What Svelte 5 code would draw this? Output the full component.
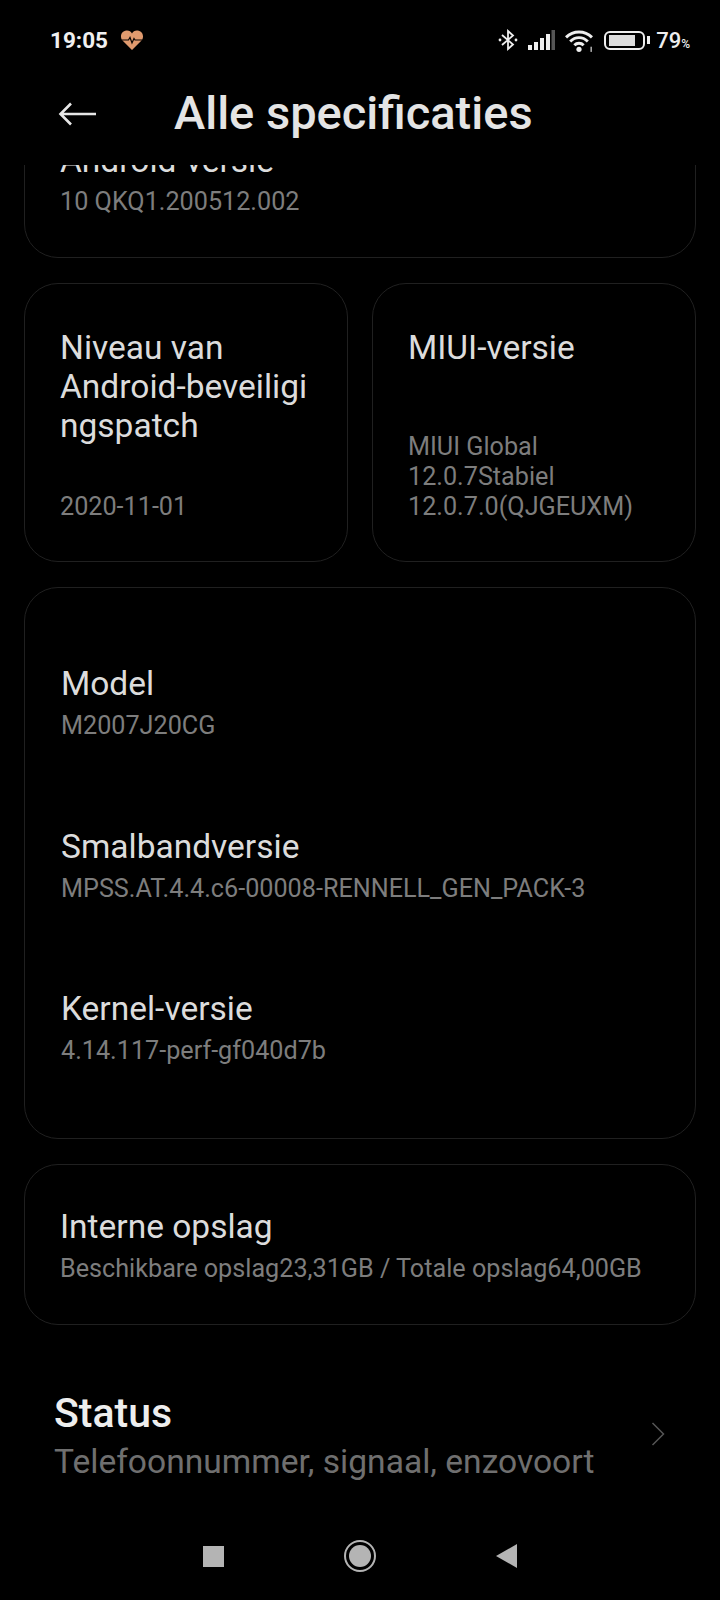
<script>
  const specs = [
    { label: 'Model', value: 'M2007J20CG' },
    { label: 'Smalbandversie', value: 'MPSS.AT.4.4.c6-00008-RENNELL_GEN_PACK-3' },
    { label: 'Kernel-versie', value: '4.14.117-perf-gf040d7b' }
  ];
</script>

<div class="phone">
  <div class="statusbar">
    <div class="left">
      <span class="time">19:05</span>
      <svg class="heart" width="24" height="22" viewBox="0 0 24 22">
        <path d="M12 21 L2.5 11.5 C-0.5 8 1 2 6.5 1.5 C9 1.3 11 2.5 12 4.5 C13 2.5 15 1.3 17.5 1.5 C23 2 24.5 8 21.5 11.5 Z" fill="#e09a6e"/>
        <path d="M1.5 11 H8.5 L10 8.5 L12 14 L14 9.5 L15 11 H22.5" fill="none" stroke="#0a0503" stroke-width="1.2"/>
      </svg>
    </div>
    <div class="right">
      <svg width="20" height="24" viewBox="0 0 20 24">
        <path d="M4 7 L15 16.5 L10 21 V3 L15 7.5 L4 17" fill="none" stroke="#eee" stroke-width="1.8"/>
        <circle cx="2" cy="12" r="1.4" fill="#eee"/><circle cx="18" cy="12" r="1.4" fill="#eee"/>
      </svg>
      <svg width="27" height="20" viewBox="0 0 27 20">
        <rect x="0" y="15" width="4" height="5" fill="#eee"/>
        <rect x="6" y="12" width="4" height="8" fill="#eee"/>
        <rect x="12" y="8" width="4" height="12" fill="#eee"/>
        <rect x="18" y="4" width="4" height="16" fill="#eee"/>
        <rect x="23.5" y="0" width="3.5" height="20" fill="#555"/>
      </svg>
      <svg width="28" height="23" viewBox="1 0 27 22">
        <path d="M2 8 C9 1 20 1 27 8 M6 12 C11 7 18 7 23 12 M10 15.5 C12.5 13 16.5 13 19 15.5" fill="none" stroke="#eee" stroke-width="2.8"/>
        <circle cx="14.5" cy="19.5" r="2.5" fill="#eee"/>
        <rect x="25.5" y="17" width="1.5" height="5" fill="#aaa"/>
      </svg>
      <div class="battery"><div class="level"></div></div>
      <div class="nub"></div>
      <span class="pct">79<small>%</small></span>
    </div>
  </div>

  <header>
    <svg width="40" height="28" viewBox="0 0 40 28">
      <path d="M38 14 H3 M13 3.5 L2.5 14 L13 24.5" fill="none" stroke="#e6e6e6" stroke-width="2.6"/>
    </svg>
    <h1>Alle specificaties</h1>
  </header>

  <main>
    <section class="card android">
      <h3>Android-versie</h3>
      <p>10 QKQ1.200512.002</p>
    </section>

    <div class="pair">
      <section class="card half">
        <h3>Niveau van<br />Android-beveiligi<br />ngspatch</h3>
        <p>2020-11-01</p>
      </section>
      <section class="card half">
        <h3>MIUI-versie</h3>
        <p>MIUI Global<br />12.0.7Stabiel<br />12.0.7.0(QJGEUXM)</p>
      </section>
    </div>

    <section class="card list">
      {#each specs as s}
        <div class="row">
          <h3>{s.label}</h3>
          <p>{s.value}</p>
        </div>
      {/each}
    </section>

    <section class="card storage">
      <h3>Interne opslag</h3>
      <p>Beschikbare opslag23,31GB / Totale opslag64,00GB</p>
    </section>

    <div class="status">
      <div>
        <div class="st-title">Status</div>
        <div class="st-sub">Telefoonnummer, signaal, enzovoort</div>
      </div>
      <svg width="14" height="24" viewBox="0 0 14 24">
        <path d="M1.5 1 L12.5 12 L1.5 23" fill="none" stroke="#555" stroke-width="1.5"/>
      </svg>
    </div>
  </main>

  <nav>
    <div class="square"></div>
    <div class="home"><div></div></div>
    <svg width="21" height="24" viewBox="0 0 21 24"><path d="M21 0 V24 L0 12 Z" fill="#b4b4b4"/></svg>
  </nav>
</div>

<style>
  :global(body) { margin: 0; background: #000; }
  .phone {
    width: 720px;
    height: 1600px;
    background: #000;
    color: #e4e4e4;
    font-family: Roboto, "Liberation Sans", sans-serif;
    display: flex;
    flex-direction: column;
    overflow: hidden;
  }
  .statusbar {
    height: 78px;
    flex: none;
    box-sizing: border-box;
    padding: 2px 30px 0 50px;
    display: flex;
    justify-content: space-between;
    align-items: center;
  }
  .left, .right { display: flex; align-items: center; }
  .time { font-size: 22.5px; font-weight: 700; color: #f0f0f0; }
  .heart { margin-left: 12px; }
  .right svg { margin-right: 10px; }
  .battery {
    width: 41px;
    height: 19px;
    box-sizing: border-box;
    border: 2.5px solid #eee;
    border-radius: 6px;
    padding: 2px 3px;
    margin-left: 1px;
  }
  .level { width: 26px; height: 100%; background: #ddd; }
  .nub { width: 3px; height: 8px; background: #eee; margin-left: 2px; }
  .pct { font-size: 22px; font-weight: 500; color: #eee; margin-left: 6px; }
  .pct small { font-size: 12px; }
  header {
    height: 87px;
    flex: none;
    display: flex;
    align-items: center;
    padding-left: 58px;
    padding-bottom: 19px;
    box-sizing: border-box;
  }
  header svg { margin-top: 4px; }
  h1 { margin: 0 0 0 76px; font-size: 47px; font-weight: 500; color: #e4e4e4; }
  main {
    flex: 1;
    min-height: 0;
    overflow: hidden;
    padding: 0 24px;
  }
  .card {
    box-sizing: border-box;
    border: 1px solid #202020;
    border-radius: 34px;
    margin-bottom: 25px;
  }
  h3 { margin: 0; font-size: 33.5px; font-weight: 400; color: #dcdcdc; line-height: 39px; }
  p { margin: 0; font-size: 25.2px; font-weight: 400; color: #7d7d7d; line-height: 30px; }
  .android { margin-top: -60px; height: 153px; padding: 35px 35px 0; }
  .android h3 { margin-bottom: 7px; }
  .pair { display: grid; grid-template-columns: 324px 324px; gap: 24px; margin-bottom: 25px; }
  .half {
    height: 279px;
    margin: 0;
    padding: 44px 35px 39px;
    display: flex;
    flex-direction: column;
    justify-content: space-between;
  }
  .list { height: 552px; padding: 76px 36px 0; }
  .row { height: 162.5px; }
  .row h3 { margin-bottom: 8px; }
  .storage { height: 161px; padding: 42px 35px 0; }
  .storage h3 { margin-bottom: 8px; }
  .status {
    display: flex;
    justify-content: space-between;
    align-items: center;
    padding: 40px 31px 0 30px;
  }
  .status svg { margin-bottom: 10px; }
  .st-title { font-size: 41px; font-weight: 500; color: #eee; line-height: 46px; }
  .st-sub { font-size: 33.6px; color: #6f6f6f; line-height: 51px; }
  nav {
    height: 100px;
    flex: none;
    display: flex;
    align-items: center;
    justify-content: center;
    gap: 120px;
    box-sizing: border-box;
    padding-top: 12px;
  }
  .square { width: 21px; height: 21px; background: #b4b4b4; }
  .home {
    width: 32px;
    height: 32px;
    box-sizing: border-box;
    border: 2px solid #b4b4b4;
    border-radius: 50%;
    padding: 3px;
  }
  .home div { width: 100%; height: 100%; border-radius: 50%; background: #b4b4b4; }
</style>
